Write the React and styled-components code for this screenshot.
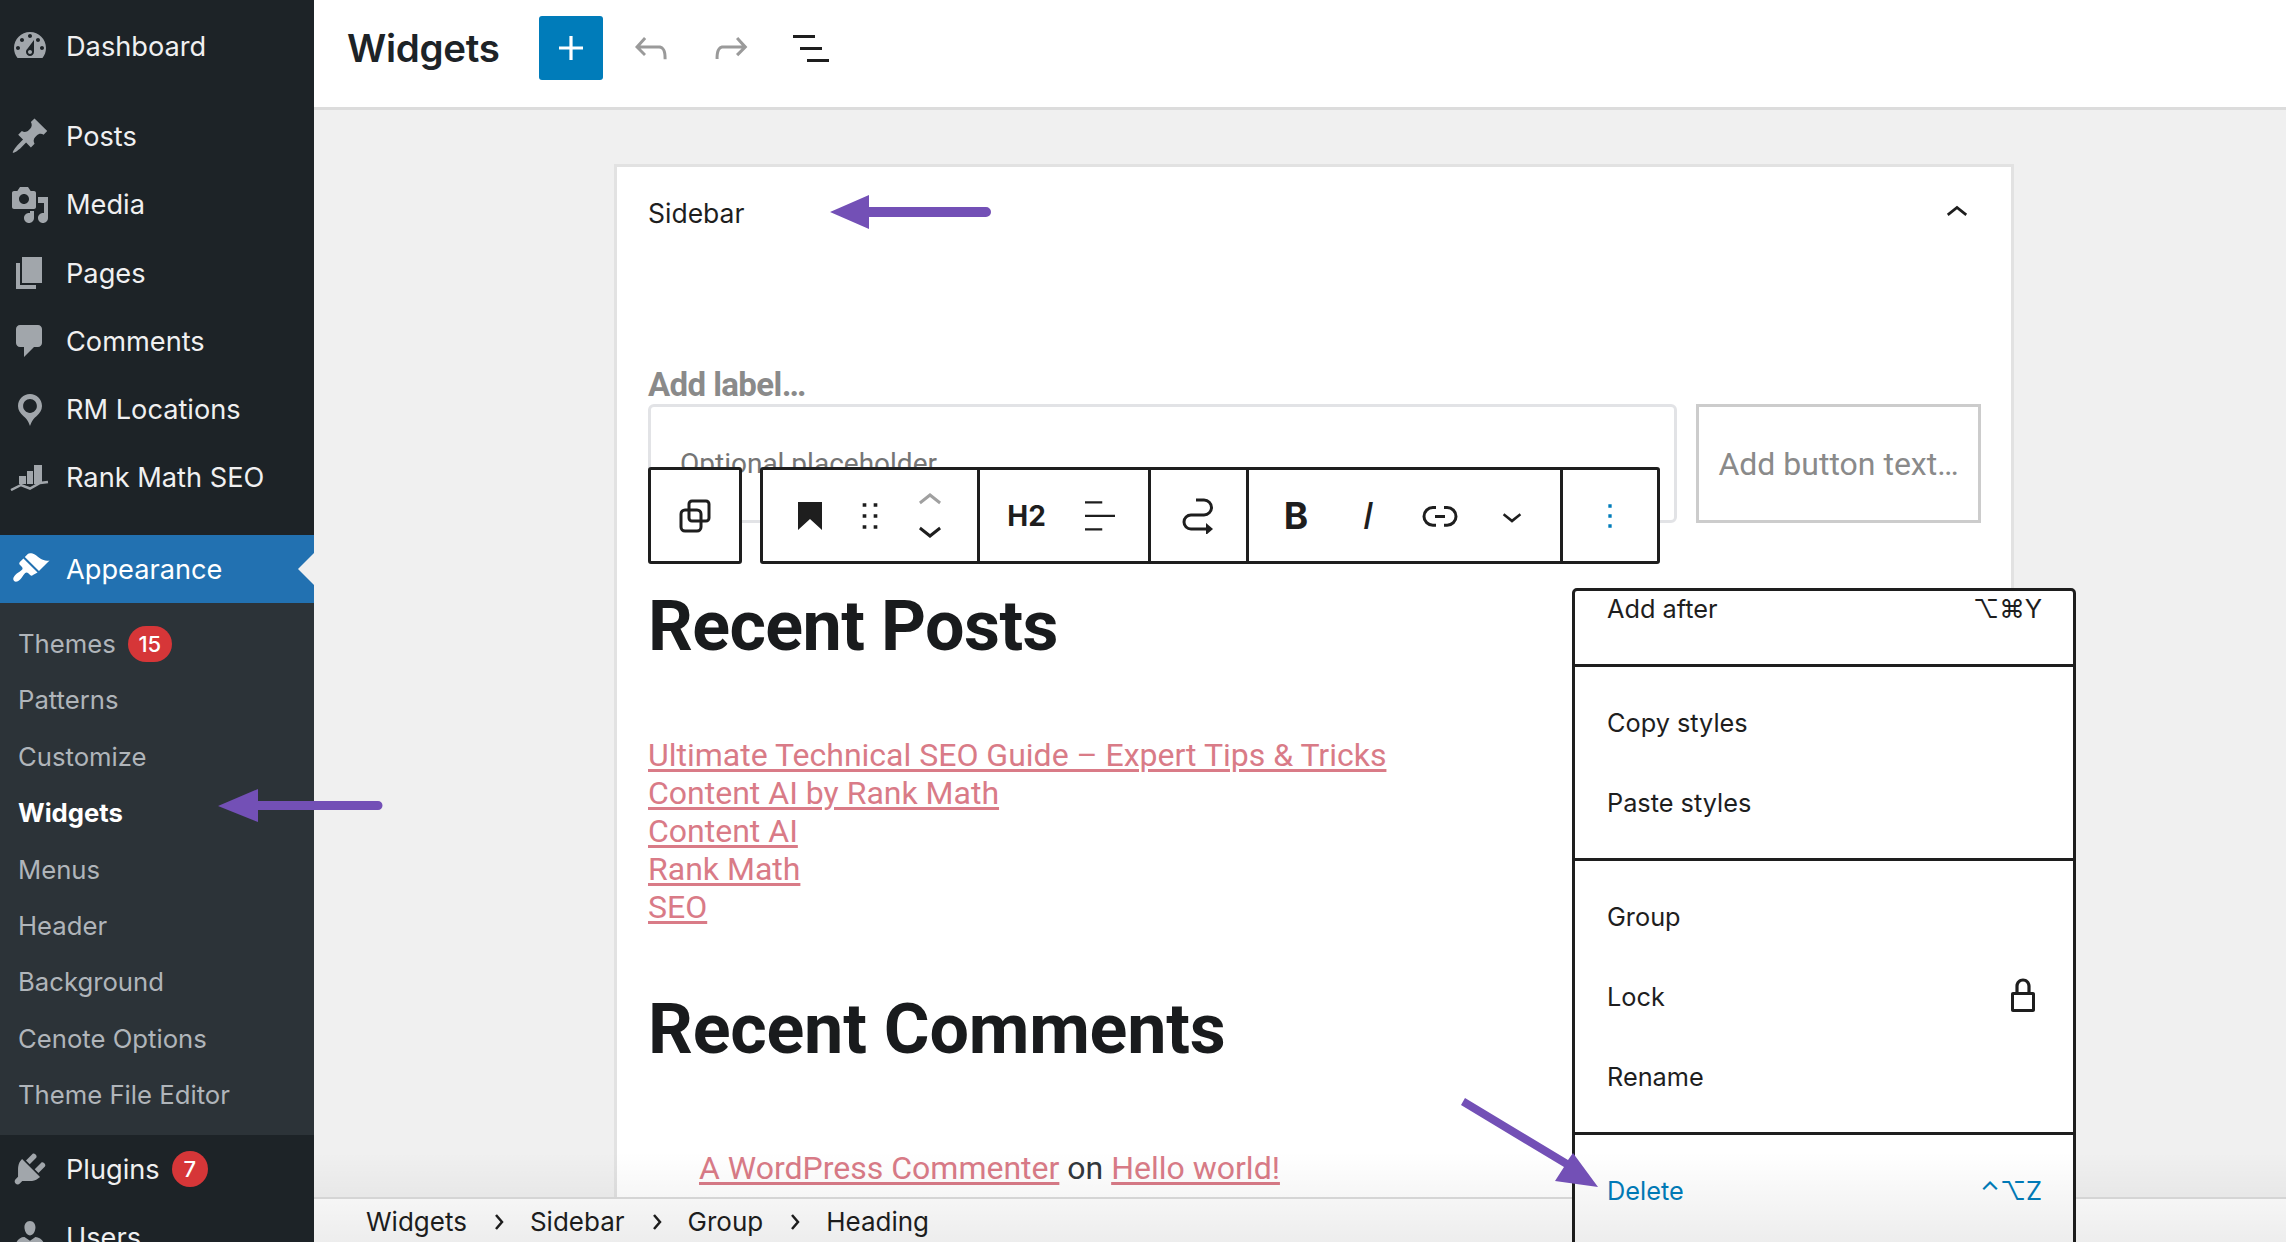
import React from "react";
import styled, { createGlobalStyle } from "styled-components";

const Reset = createGlobalStyle`
  html, body { margin: 0; padding: 0; height: 100%; background: #f0f0f0; }
  * { box-sizing: border-box; }
  body { font-family: Inter, "Liberation Sans", sans-serif; }
`;

const Page = styled.div`
  position: relative;
  display: flex;
  width: 2286px;
  height: 1242px;
  overflow: hidden;
`;

/* admin sidebar */
const Sidebar = styled.nav`
  flex: 0 0 314px;
  background: #1d2327;
  padding-top: 12px;
  display: flex;
  flex-direction: column;
  overflow: hidden;
`;
const NavRow = styled.div`
  position: relative;
  flex: 0 0 68.3px;
  display: flex;
  align-items: center;
  padding-left: 10px;
  gap: 7px;
  color: ${(p) => (p.$active ? "#fff" : "#f0f0f1")};
  background: ${(p) => (p.$active ? "#2271b1" : "transparent")};
  margin-top: ${(p) => p.$top || 0}px;
  font-size: 27.2px;
  svg { color: ${(p) => (p.$active ? "#fff" : "#a1a6ab")}; }
`;
const NavIconBox = styled.span`
  flex: 0 0 40px;
  height: 40px;
  margin-right: 9px;
  display: flex;
  align-items: center;
  justify-content: center;
`;
const Caret = styled.span`
  position: absolute;
  right: 0;
  top: 18px;
  border: 16px solid transparent;
  border-right-color: #f0f0f0;
  border-left-width: 0;
`;
const SubMenu = styled.div`
  background: #2c3338;
  padding: 12px 0 12px 18px;
  display: flex;
  flex-direction: column;
`;
const SubItem = styled.div`
  height: 56.4px;
  display: flex;
  align-items: center;
  gap: 12px;
  font-size: 25.7px;
  color: ${(p) => (p.$current ? "#fff" : "#b0b5ba")};
  font-weight: ${(p) => (p.$current ? 700 : 400)};
`;
const Badge = styled.span`
  min-width: ${(p) => (p.$wide ? 44 : 36)}px;
  height: 36px;
  margin-left: ${(p) => p.$ml || 0}px;
  border-radius: 18px;
  background: #d63638;
  color: #fff;
  font-size: 22px;
  font-weight: 500;
  display: flex;
  align-items: center;
  justify-content: center;
`;

/* main column */
const Main = styled.main`
  position: relative;
  flex: 1;
  display: flex;
  flex-direction: column;
  min-width: 0;
`;
const Header = styled.header`
  flex: 0 0 110px;
  background: #fff;
  border-bottom: 3px solid #dcdcdc;
  display: flex;
  align-items: center;
  padding: 0 0 12px 33px;
`;
const Title = styled.h1`
  margin: 0 36px 0 0;
  width: 156px;
  font-size: 38.5px;
  font-weight: 600;
  color: #1d2327;
  letter-spacing: -0.3px;
`;
const AddButton = styled.div`
  width: 64px;
  height: 64px;
  border-radius: 3px;
  background: #007cba;
  color: #fff;
  margin: 0 22px 0 0;
  display: flex;
  align-items: center;
  justify-content: center;
`;
const HeadIcon = styled.span`
  width: 52px;
  height: 48px;
  margin-right: 28px;
  display: flex;
  align-items: center;
  justify-content: center;
  color: ${(p) => (p.$muted ? "#9a9a9a" : "#1e1e1e")};
`;

const Canvas = styled.div`
  flex: 1;
  min-height: 0;
  overflow: hidden;
  padding: 54px 0 0 300px;
`;
const Card = styled.section`
  width: 1400px;
  height: 1200px;
  background: #fff;
  border: 3px solid #e2e2e2;
  padding: 0 30px 0 31px;
`;
const CardHead = styled.div`
  height: 92px;
  display: flex;
  align-items: center;
  justify-content: space-between;
  font-size: 26.5px;
  color: #1e1e1e;
  padding-right: 2px;
`;
const FormLabel = styled.div`
  margin-top: 111px;
  height: 34px;
  line-height: 30px;
  font-family: Roboto, sans-serif;
  font-size: 33px;
  font-weight: 700;
  color: #8a8a8a;
  letter-spacing: -0.6px;
`;
const FormRow = styled.div`
  display: flex;
  gap: 19px;
  height: 119px;
`;
const FormInput = styled.div`
  width: 1029px;
  border: 3px solid #e2e3e6;
  border-radius: 6px;
  padding: 37px 0 0 29px;
  font-family: Roboto, sans-serif;
  font-size: 28px;
  line-height: 40px;
  color: #757575;
`;
const FormButton = styled.div`
  width: 285px;
  border: 3px solid #ccc;
  display: flex;
  align-items: center;
  justify-content: center;
  font-family: Roboto, sans-serif;
  font-size: 32px;
  color: #8a8a8a;
`;
const WidgetHeading = styled.h2`
  margin: ${(p) => p.$top}px 0 0;
  height: 80px;
  line-height: 80px;
  font-family: Roboto, sans-serif;
  font-size: 70px;
  font-weight: 700;
  color: #191b1d;
  letter-spacing: ${(p) => p.$track}px;
`;
const LinkList = styled.div`
  margin-top: 70px;
  display: flex;
  flex-direction: column;
  align-items: flex-start;
`;
const PostLink = styled.a`
  font-family: Roboto, sans-serif;
  font-size: 32px;
  line-height: 38px;
  color: #d97b87;
  text-decoration: underline;
  text-decoration-thickness: 2.5px;
  text-underline-offset: 3px;
`;
const CommentLine = styled.div`
  margin-top: 80px;
  padding-left: 51px;
  font-family: Roboto, sans-serif;
  font-size: 32px;
  line-height: 38px;
  color: #32373c;
`;

const StatusBar = styled.footer`
  flex: 0 0 45px;
  background: #fff;
  border-top: 2px solid #ddd;
  display: flex;
  align-items: center;
  padding: 2px 0 0 52px;
  font-size: 26px;
  color: #1e1e1e;
`;
const Crumb = styled.span`
  margin-right: 26px;
`;
const CrumbSep = styled.svg`
  width: 12px;
  height: 18px;
  margin-right: 25px;
`;
const BottomFade = styled.div`
  position: absolute;
  left: 0;
  right: 0;
  bottom: 0;
  height: 90px;
  background: linear-gradient(rgba(0, 0, 0, 0), rgba(0, 0, 0, 0.07));
  pointer-events: none;
  z-index: 5;
`;

/* block toolbar over the form */
const Toolbar = styled.div`
  position: absolute;
  left: 334px;
  top: 467px;
  display: flex;
  gap: 18px;
  height: 97px;
`;
const ToolBox = styled.div`
  display: flex;
  width: ${(p) => p.$w}px;
  background: #fff;
  border: 3px solid #1e1e1e;
  border-radius: 3px;
`;
const ToolSection = styled.div`
  display: flex;
  flex: 0 0 ${(p) => p.$w}px;
  align-items: center;
  padding-left: ${(p) => p.$pad || 0}px;
  & + & { border-left: 3px solid #1e1e1e; }
`;
const ToolBtn = styled.div`
  flex: 0 0 ${(p) => p.$w}px;
  height: 100%;
  display: flex;
  flex-direction: ${(p) => (p.$stack ? "column" : "row")};
  align-items: center;
  justify-content: center;
  color: ${(p) => (p.$blue ? "#007cba" : "#1e1e1e")};
`;
const BoldGlyph = styled.span`
  font-size: ${(p) => p.$size}px;
  font-weight: 700;
  line-height: 1;
`;
const ItalicGlyph = styled.span`
  font-family: "Liberation Sans", sans-serif;
  font-style: italic;
  font-size: 39px;
  line-height: 1;
`;
const Half = styled.span`
  display: flex;
  color: ${(p) => (p.$muted ? "#a0a0a0" : "#1e1e1e")};
  margin: ${(p) => p.$m};
`;

/* options dropdown */
const Menu = styled.div`
  position: absolute;
  left: 1258px;
  top: 588px;
  width: 504px;
  height: 720px;
  background: #fff;
  border: 3px solid #1e1e1e;
  border-radius: 5px;
  z-index: 3;
`;
const MenuSection = styled.div`
  height: ${(p) => p.$h}px;
  padding: ${(p) => p.$pad}px 0 0 32px;
  & + & { border-top: 3px solid #1e1e1e; }
`;
const MenuItem = styled.div`
  height: ${(p) => p.$h || 80}px;
  padding-right: ${(p) => p.$right || 31}px;
  display: flex;
  align-items: center;
  justify-content: space-between;
  font-size: 25.3px;
  color: ${(p) => (p.$danger ? "#007cba" : "#1e1e1e")};
`;
const Shortcut = styled.span`
  font-family: Inter, "DejaVu Sans", sans-serif;
  font-size: 25.5px;
`;

const ArrowLayer = styled.svg`
  position: absolute;
  left: 0;
  top: 0;
  z-index: 6;
  pointer-events: none;
`;

const Dash = ({ d, size = 40 }) => (
  <svg width={size} height={size} viewBox="0 0 20 20" fill="currentColor">
    <path d={d} />
  </svg>
);
const Wp = ({ d, size = 48, fill = "currentColor" }) => (
  <svg width={size} height={size} viewBox="0 0 24 24" fill={fill}>
    <path d={d} />
  </svg>
);

const icons = {
  dashboard:
    "M3.76 16h12.48c1.1-1.37 1.76-3.11 1.76-5 0-4.42-3.58-8-8-8s-8 3.58-8 8c0 1.89.66 3.63 1.76 5zM10 4c.55 0 1 .45 1 1s-.45 1-1 1-1-.45-1-1 .45-1 1-1zM6 6c.55 0 1 .45 1 1s-.45 1-1 1-1-.45-1-1 .45-1 1-1zm8 0c.55 0 1 .45 1 1s-.45 1-1 1-1-.45-1-1 .45-1 1-1zm-5.37 5.55L12 7v6c0 1.1-.9 2-2 2s-2-.9-2-2c0-.57.24-1.08.63-1.45zM4 10c.55 0 1 .45 1 1s-.45 1-1 1-1-.45-1-1 .45-1 1-1zm12 0c.55 0 1 .45 1 1s-.45 1-1 1-1-.45-1-1 .45-1 1-1zm-5 3c0-.55-.45-1-1-1s-1 .45-1 1 .45 1 1 1 1-.45 1-1z",
  pin: "M10.44 3.02l1.82-1.82 6.36 6.35-1.83 1.82c-1.05-.68-2.48-.57-3.41.36l-.75.75c-.92.93-1.04 2.35-.35 3.41l-1.83 1.82-2.41-2.41-2.8 2.79c-.42.42-3.38 2.71-3.8 2.29s1.86-3.39 2.28-3.81l2.79-2.79L4.1 9.36l1.83-1.82c1.05.69 2.48.57 3.4-.36l.75-.75c.93-.92 1.05-2.35.36-3.41z",
  media:
    "M13 11V4c0-.55-.45-1-1-1h-1.67L9 1H5L3.67 3H2c-.55 0-1 .45-1 1v7c0 .55.45 1 1 1h10c.55 0 1-.45 1-1zM7 4.5c1.38 0 2.5 1.12 2.5 2.5S8.38 9.5 7 9.5 4.5 8.38 4.5 7 5.62 4.5 7 4.5zM14 6h5v10.5c0 1.38-1.12 2.5-2.5 2.5S14 17.88 14 16.5s1.12-2.5 2.5-2.5c.17 0 .34.02.5.05V9h-3V6zm-4 8.05V13h2v3.5c0 1.38-1.12 2.5-2.5 2.5S7 17.88 7 16.5 8.12 14 9.5 14c.17 0 .34.02.5.05z",
  pages: "M6 15V2h10v13H6zm-1 1h8v2H3V5h2v11z",
  comments:
    "M5 2h9c1.1 0 2 .9 2 2v7c0 1.1-.9 2-2 2h-2l-5 5v-5H5c-1.1 0-2-.9-2-2V4c0-1.1.9-2 2-2z",
  location:
    "M10 2C6.69 2 4 4.69 4 8c0 2.02 1.17 3.71 2.53 4.89.43.37 1.18.96 1.85 1.83.74.97 1.14 1.89 1.62 3.28.48-1.39.88-2.31 1.62-3.28.67-.87 1.42-1.46 1.85-1.83C14.83 11.71 16 10.02 16 8c0-3.31-2.69-6-6-6zm0 2.56c1.9 0 3.44 1.54 3.44 3.44S11.9 11.44 10 11.44 6.56 9.9 6.56 8 8.1 4.56 10 4.56z",
  appearance:
    "M14.48 11.06L7.41 3.99l1.5-1.5c.5-.56 2.3-.47 3.51.32 1.21.8 1.43 1.28 2.91 2.1 1.18.64 2.45 1.26 4.45.85zm-.71.71L6.7 4.7 4.93 6.47c-.39.39-.39 1.02 0 1.41l1.06 1.06c.39.39.39 1.03 0 1.42-.6.6-1.43 1.11-2.21 1.69-.35.26-.7.53-1.01.84-1.34 1.34-1.34 2.4-.73 3.05.62.62 1.69.62 3.03-.72.31-.31.58-.66.84-1.01.58-.78 1.09-1.61 1.69-2.21.39-.39 1.02-.39 1.41 0l1.06 1.06c.39.39 1.02.39 1.41 0z",
  plugins:
    "M13.11 4.36L9.87 7.6 8 5.73l3.24-3.24c.35-.34 1.05-.2 1.56.32.52.51.66 1.21.31 1.55zm-8 1.77l.91-1.12 9.01 9.01-1.19.84c-.71.71-2.63 1.16-3.82 1.16H6.14L4.9 17.26c-.59.59-1.54.59-2.12 0-.59-.58-.59-1.53 0-2.12l1.24-1.24v-3.88c0-1.13.4-3.19 1.09-3.89zm7.26 3.97l3.24-3.24c.34-.35 1.04-.21 1.55.31.52.51.66 1.21.31 1.55l-3.24 3.25z",
  users:
    "M10 9.25c-2.27 0-2.73-3.44-2.73-3.44C7 4.02 7.82 2 9.97 2c2.16 0 2.98 2.02 2.71 3.81 0 0-.41 3.44-2.68 3.44zm0 2.57L12.72 10c2.39 0 4.52 2.33 4.52 4.53v2.49s-3.65 1.13-7.24 1.13c-3.65 0-7.24-1.13-7.24-1.13v-2.49c0-2.25 1.94-4.48 4.47-4.48z",
};

const wp = {
  plus: "M18 11.2h-5.2V6h-1.6v5.2H6v1.6h5.2V18h1.6v-5.2H18z",
  undo: "M18.3 11.7c-.6-.6-1.4-.9-2.3-.9H6.7l2.9-3.3-1.1-1-4.5 5L8.5 16l1-1-2.7-2.7H16c.5 0 .9.2 1.3.5 1 1 1 3.4 1 4.5v.3h1.5v-.2c0-1.5 0-4.3-1.5-5.7z",
  redo: "M15.6 6.5l-1.1 1 2.9 3.3H8c-.9 0-1.7.3-2.3.9-1.4 1.5-1.4 4.2-1.4 5.6v.2h1.5v-.3c0-1.1 0-3.5 1-4.5.3-.3.7-.5 1.3-.5h9.2L14.5 15l1.1 1.1 4.6-4.6-4.6-5z",
  list: "M3 5.5h11V7H3V5.5zm3.5 6h11V13h-11v-1.5zM21 17.5H10V19h11v-1.5z",
  up: "M6.5 12.4L12 8l5.5 4.4-.9 1.2L12 10l-4.6 3.6-.9-1.2z",
  down: "M17.5 11.6L12 16l-5.5-4.4.9-1.2L12 14l4.6-3.6.9 1.2z",
  drag: "M8 7h2V5H8v2zm0 6h2v-2H8v2zm0 6h2v-2H8v2zm6-14v2h2V5h-2zm0 8h2v-2h-2v2zm0 6h2v-2h-2v2z",
  align: "M2 2.2h11.5v1.5H2zm0 9h20v1.5H2zm0 9h11.5v1.5H2z",
  link: "M10 17.389H8.444A5.194 5.194 0 1 1 8.444 7H10v1.5H8.444a3.694 3.694 0 0 0 0 7.389H10v1.5ZM14 7h1.556a5.194 5.194 0 0 1 0 10.39H14v-1.5h1.556a3.694 3.694 0 0 0 0-7.39H14V7Zm-4.5 6h5v-1.5h-5V13Z",
  dots: "M13 19h-2v-2h2v2zm0-6h-2v-2h2v2zm0-6h-2V5h2v2z",
  lock: "M17 10h-1.2V7c0-2.1-1.7-3.8-3.8-3.8-2.1 0-3.8 1.7-3.8 3.8v3H7c-.6 0-1 .4-1 1v8c0 .6.4 1 1 1h10c.6 0 1-.4 1-1v-8c0-.6-.4-1-1-1zM9.8 7c0-1.2 1-2.2 2.2-2.2 1.2 0 2.2 1 2.2 2.2v3H9.8V7zm6.7 11.5h-9v-7h9v7z",
};

const RankMathIcon = () => (
  <svg width="40" height="26" viewBox="0 0 40 26" fill="currentColor">
    <rect x="9" y="11" width="7" height="8" />
    <rect x="17" y="6" width="6" height="13" />
    <rect x="24" y="0" width="8" height="19" />
    <path d="M1 25l10-5 9 3.500 10-5.500 8-1" fill="none" stroke="currentColor" strokeWidth="2.5" />
  </svg>
);

const DuplicateIcon = () => (
  <svg width="36" height="36" viewBox="0 0 36 36" fill="none" stroke="currentColor" strokeWidth="3">
    <rect x="11" y="3" width="20" height="20" rx="3" />
    <rect x="3" y="12" width="20" height="21" rx="4" />
  </svg>
);
const BookmarkIcon = () => (
  <svg width="24" height="28" viewBox="0 0 24 28" fill="currentColor">
    <path d="M0 0h24v28l-12-11L0 28z" />
  </svg>
);
const TransformIcon = () => (
  <svg width="36" height="36" viewBox="0 0 36 36" fill="none" stroke="currentColor" strokeWidth="3">
    <path d="M16 2h8a7.500 7.500 0 0 1 0 15H11a7 7 0 0 0 0 14h15" />
    <path d="M26 25v12l7-6z" fill="currentColor" stroke="none" />
  </svg>
);

const PurpleArrows = () => (
  <ArrowLayer width="2286" height="1242" viewBox="0 0 2286 1242" fill="#7350b6">
    <path d="M830 212l39-17v12h117a5 5 0 0 1 0 10H869v12z" />
    <path d="M218 806l40-17v12h120a4.500 4.500 0 0 1 0 9H258v12z" />
    <path d="M1598 1187l-43-6 9-14-103-62 4-7 103 62 5-7z" />
  </ArrowLayer>
);

const topItems = [
  ["Posts", icons.pin],
  ["Media", icons.media],
  ["Pages", icons.pages],
  ["Comments", icons.comments],
  ["RM Locations", icons.location],
];
const subItems = ["Patterns", "Customize", "Widgets", "Menus", "Header", "Background", "Cenote Options", "Theme File Editor"];
const posts = ["Ultimate Technical SEO Guide – Expert Tips & Tricks", "Content AI by Rank Math", "Content AI", "Rank Math", "SEO"];
const crumbs = ["Widgets", "Sidebar", "Group"];

export default function App() {
  return (
    <Page>
      <Reset />
      <Sidebar>
        <NavRow>
          <NavIconBox><Dash d={icons.dashboard} /></NavIconBox>
          Dashboard
        </NavRow>
        <NavRow $top={22}>
          <NavIconBox><Dash d={icons.pin} /></NavIconBox>
          Posts
        </NavRow>
        {topItems.slice(1).map(([label, d]) => (
          <NavRow key={label}>
            <NavIconBox><Dash d={d} /></NavIconBox>
            {label}
          </NavRow>
        ))}
        <NavRow>
          <NavIconBox><RankMathIcon /></NavIconBox>
          Rank Math SEO
        </NavRow>
        <NavRow $active $top={23}>
          <NavIconBox><Dash d={icons.appearance} /></NavIconBox>
          Appearance
          <Caret />
        </NavRow>
        <SubMenu>
          <SubItem>Themes <Badge $wide>15</Badge></SubItem>
          {subItems.map((label) => (
            <SubItem key={label} $current={label === "Widgets"}>{label}</SubItem>
          ))}
        </SubMenu>
        <NavRow>
          <NavIconBox><Dash d={icons.plugins} /></NavIconBox>
          Plugins <Badge $ml={5}>7</Badge>
        </NavRow>
        <NavRow>
          <NavIconBox><Dash d={icons.users} /></NavIconBox>
          Users
        </NavRow>
      </Sidebar>

      <Main>
        <Header>
          <Title>Widgets</Title>
          <AddButton><Wp d={wp.plus} /></AddButton>
          <HeadIcon $muted><Wp d={wp.undo} /></HeadIcon>
          <HeadIcon $muted><Wp d={wp.redo} /></HeadIcon>
          <HeadIcon><Wp d={wp.list} /></HeadIcon>
        </Header>
        <Canvas>
          <Card>
            <CardHead>
              Sidebar
              <Wp d={wp.up} size={44} />
            </CardHead>
            <FormLabel>Add label…</FormLabel>
            <FormRow>
              <FormInput>Optional placeholder...</FormInput>
              <FormButton>Add button text…</FormButton>
            </FormRow>
            <WidgetHeading $top={63} $track={-0.6}>Recent Posts</WidgetHeading>
            <LinkList>
              {posts.map((title) => (
                <PostLink key={title}>{title}</PostLink>
              ))}
            </LinkList>
            <WidgetHeading $top={63} $track={-0.2}>Recent Comments</WidgetHeading>
            <CommentLine>
              <PostLink>A WordPress Commenter</PostLink> on <PostLink>Hello world!</PostLink>
            </CommentLine>
          </Card>
        </Canvas>
        <StatusBar>
          {crumbs.map((c) => (
            <React.Fragment key={c}>
              <Crumb>{c}</Crumb>
              <CrumbSep viewBox="0 0 12 18" fill="none" stroke="currentColor" strokeWidth="2.5">
                <path d="M3 2l6 7-6 7" />
              </CrumbSep>
            </React.Fragment>
          ))}
          <Crumb>Heading</Crumb>
        </StatusBar>

        <Toolbar>
          <ToolBox $w={94}>
            <ToolSection $w={88}>
              <ToolBtn $w={90}><DuplicateIcon /></ToolBtn>
            </ToolSection>
          </ToolBox>
          <ToolBox $w={900}>
            <ToolSection $w={214} $pad={17}>
              <ToolBtn $w={60}><BookmarkIcon /></ToolBtn>
              <ToolBtn $w={60}><Wp d={wp.drag} size={44} /></ToolBtn>
              <ToolBtn $w={60} $stack>
                <Half $muted $m="0 0 -19px"><Wp d={wp.up} size={48} /></Half>
                <Half $m="0"><Wp d={wp.down} size={48} /></Half>
              </ToolBtn>
            </ToolSection>
            <ToolSection $w={171} $pad={10}>
              <ToolBtn $w={73}><BoldGlyph $size={28}>H2</BoldGlyph></ToolBtn>
              <ToolBtn $w={73}><Wp d={wp.align} size={36} /></ToolBtn>
            </ToolSection>
            <ToolSection $w={98}>
              <ToolBtn $w={93}><TransformIcon /></ToolBtn>
            </ToolSection>
            <ToolSection $w={314} $pad={11}>
              <ToolBtn $w={72}><BoldGlyph $size={37}>B</BoldGlyph></ToolBtn>
              <ToolBtn $w={72}><ItalicGlyph>I</ItalicGlyph></ToolBtn>
              <ToolBtn $w={72}><Wp d={wp.link} size={48} /></ToolBtn>
              <ToolBtn $w={72}><Wp d={wp.down} size={40} /></ToolBtn>
            </ToolSection>
            <ToolSection $w={97}>
              <ToolBtn $w={94} $blue><Wp d={wp.dots} size={40} /></ToolBtn>
            </ToolSection>
          </ToolBox>
        </Toolbar>

        <Menu>
          <MenuSection $h={73} $pad={0}>
            <MenuItem $h={34}>Add after<Shortcut>⌥⌘Y</Shortcut></MenuItem>
          </MenuSection>
          <MenuSection $h={194} $pad={15}>
            <MenuItem>Copy styles</MenuItem>
            <MenuItem>Paste styles</MenuItem>
          </MenuSection>
          <MenuSection $h={274} $pad={15}>
            <MenuItem>Group</MenuItem>
            <MenuItem $right={26}>Lock<Wp d={wp.lock} size={48} /></MenuItem>
            <MenuItem>Rename</MenuItem>
          </MenuSection>
          <MenuSection $h={120} $pad={15}>
            <MenuItem $danger>Delete<Shortcut>⌃⌥Z</Shortcut></MenuItem>
          </MenuSection>
        </Menu>
        <BottomFade />
      </Main>
      <PurpleArrows />
    </Page>
  );
}
